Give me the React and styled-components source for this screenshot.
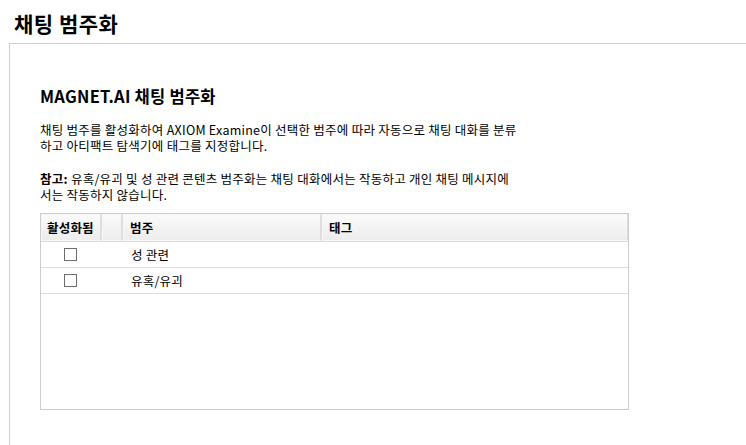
import React from "react";
import styled, { createGlobalStyle } from "styled-components";

const Global = createGlobalStyle`
  html, body { margin: 0; padding: 0; background: #fff; }
  body {
    font-family: "Noto Sans CJK KR", "Noto Sans", sans-serif;
    color: #000;
    overflow: hidden;
  }
`;

const Page = styled.div`
  width: 746px;
  height: 445px;
  display: flex;
  flex-direction: column;
`;

const TitleBar = styled.h1`
  margin: 0;
  height: 43px;
  box-sizing: border-box;
  padding: 8px 0 0 14px;
  font-size: 21px;
  letter-spacing: 0.5px;
  line-height: 30px;
  font-weight: 700;
`;

const Panel = styled.section`
  flex: 1;
  margin-left: 9px;
  border-top: 1px solid #cfcfcf;
  border-left: 1px solid #cfcfcf;
  padding: 40px 0 0 30px;
`;

const Heading = styled.h2`
  margin: 0 0 14px;
  font-size: 16.5px;
  letter-spacing: 0.25px;
  line-height: 24px;
  font-weight: 700;
`;

const Para = styled.p`
  margin: 0 0 ${(p) => p.$gap ?? 17}px;
  font-size: 12.5px;
  letter-spacing: 0.25px;
  line-height: 16px;
`;

const Table = styled.div`
  width: 589px;
  height: 197px;
  box-sizing: border-box;
  border: 1px solid #cccccc;
  display: flex;
  flex-direction: column;
`;

const cols = "61px 21px 199px 1fr";

const HeaderRow = styled.div`
  display: grid;
  grid-template-columns: ${cols};
  height: 27px;
  background: linear-gradient(#fbfbfb, #ececec);
  border-bottom: 1px solid #dcdcdc;
`;

const HeaderCell = styled.div`
  box-sizing: border-box;
  border: 1px solid #f7f7f7;
  border-right: 2px solid #dedede;
  padding-left: ${(p) => p.$pad ?? 6}px;
  font-size: 12.5px;
  letter-spacing: 0.2px;
  font-weight: 700;
  line-height: 25px;
  &:last-child { border-right: 1px solid #dedede; }
`;

const Row = styled.div`
  display: grid;
  grid-template-columns: ${cols};
  height: 26px;
  box-sizing: border-box;
  border-bottom: 1px solid #dcdcdc;
  align-items: center;
`;

const CheckCell = styled.div`
  display: flex;
  justify-content: center;
  padding-right: 2px;
`;

const Box = styled.span`
  width: 13px;
  height: 13px;
  box-sizing: border-box;
  border: 1px solid #6d6d6d;
  background: #fff;
`;

const Cell = styled.div`
  font-size: 12.5px;
  letter-spacing: 0.2px;
  padding-left: 8px;
`;

const rows = ["성 관련", "유혹/유괴"];

export default function App() {
  return (
    <Page>
      <Global />
      <TitleBar>채팅 범주화</TitleBar>
      <Panel>
        <Heading>MAGNET.AI 채팅 범주화</Heading>
        <Para>
          채팅 범주를 활성화하여 AXIOM Examine이 선택한 범주에 따라 자동으로 채팅 대화를 분류
          <br />
          하고 아티팩트 탐색기에 태그를 지정합니다.
        </Para>
        <Para $gap={10}>
          <b>참고:</b> 유혹/유괴 및 성 관련 콘텐츠 범주화는 채팅 대화에서는 작동하고 개인 채팅 메시지에
          <br />
          서는 작동하지 않습니다.
        </Para>
        <Table>
          <HeaderRow>
            <HeaderCell $pad={5}>활성화됨</HeaderCell>
            <HeaderCell />
            <HeaderCell>범주</HeaderCell>
            <HeaderCell>태그</HeaderCell>
          </HeaderRow>
          {rows.map((r) => (
            <Row key={r}>
              <CheckCell>
                <Box />
              </CheckCell>
              <div />
              <Cell>{r}</Cell>
              <div />
            </Row>
          ))}
        </Table>
      </Panel>
    </Page>
  );
}
